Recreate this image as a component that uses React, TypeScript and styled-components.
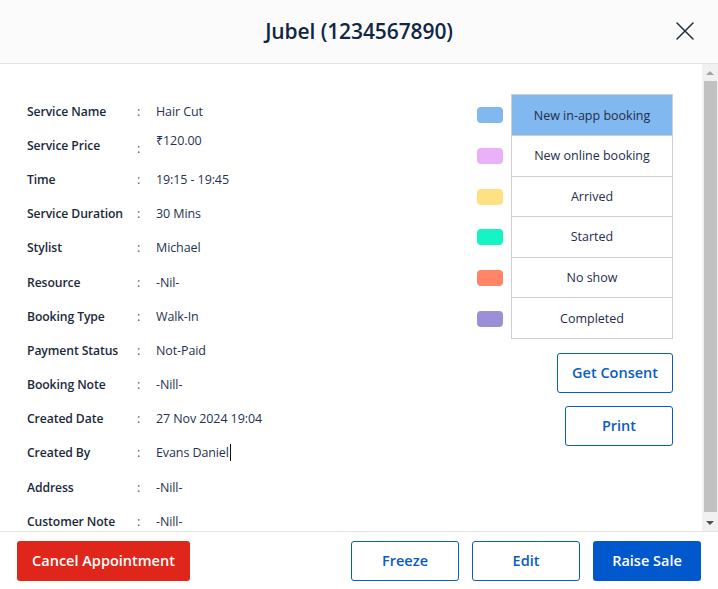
import * as React from 'react'
import styled, { createGlobalStyle } from 'styled-components'

const GlobalStyle = createGlobalStyle`
  html, body {
    margin: 0;
    padding: 0;
    background: #ffffff;
  }
  body {
    font-family: "Open Sans", "Noto Sans", sans-serif;
    color: #1d2b3a;
  }
  * {
    box-sizing: border-box;
  }
`

const Dialog = styled.div`
  width: 718px;
  height: 589px;
  display: flex;
  flex-direction: column;
  background: #fff;
`

const Header = styled.header`
  height: 64px;
  flex: none;
  display: flex;
  align-items: center;
  justify-content: center;
  position: relative;
  background: #fbfbfb;
  border-bottom: 1px solid #e4e4e4;
`

const Title = styled.h1`
  margin: 0 0 1px;
  font-size: 21px;
  font-weight: 600;
  color: #0f2744;
  letter-spacing: -0.1px;
`

const CloseButton = styled.button`
  position: absolute;
  right: 22px;
  top: 20px;
  width: 22px;
  height: 22px;
  padding: 0;
  border: 0;
  background: none;
  color: #1d2b3a;
  cursor: pointer;
`

const BodyWrap = styled.div`
  flex: 1;
  min-height: 0;
  display: flex;
`

const Body = styled.div`
  flex: 1;
  overflow: hidden;
  display: flex;
  align-items: flex-start;
  justify-content: space-between;
  padding: 30px 29px 0 27px;
`

const ScrollTrack = styled.div`
  width: 16px;
  flex: none;
  display: flex;
  flex-direction: column;
  background: #f1f1f1;
`

const ScrollArrow = styled.div<{ $down?: boolean }>`
  height: 17px;
  flex: none;
  display: flex;
  align-items: center;
  justify-content: center;

  &::before {
    content: '';
    border-left: 4px solid transparent;
    border-right: 4px solid transparent;
    ${({ $down }) =>
      $down ? 'border-top: 4px solid #505050;' : 'border-bottom: 4px solid #a3a3a3;'}
  }
`

const ScrollThumb = styled.div`
  height: 431px;
  margin: 0 1px 0 2px;
  background: #c1c1c1;
`

const ScrollRest = styled.div`
  flex: 1;
`

const Details = styled.div`
  flex: none;
  display: flex;
  flex-direction: column;
  padding-bottom: 14px;
`

const Row = styled.div`
  flex: none;
  display: grid;
  grid-template-columns: 110px 19px auto;
  align-items: center;
  height: 34.2px;
  font-size: 12.5px;
`

const Label = styled.span`
  font-size: 12.2px;
  font-weight: 600;
  color: #1b2a3a;
  letter-spacing: -0.1px;
`

const Colon = styled.span<{ $low?: boolean }>`
  color: #55606c;
  transform: ${({ $low }) => ($low ? 'translateY(3px)' : 'none')};
`

const Value = styled.span<{ $raised?: boolean }>`
  color: #1f3250;
  letter-spacing: -0.1px;
  transform: ${({ $raised }) => ($raised ? 'translateY(-5px)' : 'none')};
  display: inline-flex;
  align-items: center;
`

const Caret = styled.span`
  display: inline-block;
  width: 1px;
  height: 17px;
  background: #111;
  margin-left: 1px;
`

const Side = styled.div`
  flex: none;
  display: flex;
  flex-direction: column;
  align-items: flex-end;
`

const Legend = styled.div`
  display: grid;
  grid-template-columns: 26px 162px;
  column-gap: 8px;
`

const Swatch = styled.span<{ $color: string }>`
  align-self: center;
  height: 16px;
  border-radius: 4px;
  background: ${({ $color }) => $color};
`

const LegendCell = styled.div<{ $first?: boolean; $active?: string }>`
  height: ${({ $first }) => ($first ? '42px' : '40.6px')};
  display: flex;
  align-items: center;
  justify-content: center;
  font-size: 12.5px;
  color: #1f2d4a;
  border: 1px solid #cfcfcf;
  border-top: ${({ $first }) => ($first ? '1px solid #cfcfcf' : 'none')};
  background: ${({ $active }) => $active || '#fff'};
`

const OutlineButton = styled.button<{ $width: number }>`
  width: ${({ $width }) => $width}px;
  height: 40px;
  border: 1px solid #0a5bc4;
  border-radius: 3px;
  background: #fff;
  color: #0a5bc4;
  font-family: inherit;
  font-size: 14.5px;
  font-weight: 600;
  cursor: pointer;
`

const SideButtons = styled.div`
  margin-top: 14px;
  display: flex;
  flex-direction: column;
  align-items: flex-end;
  gap: 13px;
`

const Footer = styled.footer`
  height: 58px;
  flex: none;
  display: flex;
  align-items: center;
  gap: 13px;
  padding: 0 17px;
  border-top: 1px solid #e4e4e4;
`

const FilledButton = styled.button<{ $bg: string; $width: number }>`
  width: ${({ $width }) => $width}px;
  height: 40px;
  border: 0;
  border-radius: 3px;
  background: ${({ $bg }) => $bg};
  color: #fff;
  font-family: inherit;
  font-size: 14.5px;
  font-weight: 600;
  cursor: pointer;
`

const Spacer = styled.div`
  flex: 1;
`

const details: { label: string; value: string; raised?: boolean; caret?: boolean }[] = [
  { label: 'Service Name', value: 'Hair Cut' },
  { label: 'Service Price', value: '₹120.00', raised: true },
  { label: 'Time', value: '19:15 - 19:45' },
  { label: 'Service Duration', value: '30 Mins' },
  { label: 'Stylist', value: 'Michael' },
  { label: 'Resource', value: '-Nil-' },
  { label: 'Booking Type', value: 'Walk-In' },
  { label: 'Payment Status', value: 'Not-Paid' },
  { label: 'Booking Note', value: '-Nill-' },
  { label: 'Created Date', value: '27 Nov 2024 19:04' },
  { label: 'Created By', value: 'Evans Daniel', caret: true },
  { label: 'Address', value: '-Nill-' },
  { label: 'Customer Note', value: '-Nill-' },
]

const statuses = [
  { name: 'New in-app booking', color: '#82b8f0' },
  { name: 'New online booking', color: '#e9b1f8' },
  { name: 'Arrived', color: '#ffe083' },
  { name: 'Started', color: '#14f4c4' },
  { name: 'No show', color: '#ff8566' },
  { name: 'Completed', color: '#9c8fd8' },
]

export default function App() {
  return (
    <Dialog>
      <GlobalStyle />
      <Header>
        <Title>Jubel (1234567890)</Title>
        <CloseButton aria-label="Close">
          <svg width="22" height="22" viewBox="0 0 22 22" fill="none" stroke="currentColor" strokeWidth="1.5" strokeLinecap="round">
            <path d="M3 3 L19 19 M19 3 L3 19" />
          </svg>
        </CloseButton>
      </Header>
      <BodyWrap>
        <Body>
          <Details>
            {details.map((d) => (
              <Row key={d.label}>
                <Label>{d.label}</Label>
                <Colon $low={d.raised}>:</Colon>
                <Value $raised={d.raised}>
                  {d.value}
                  {d.caret && <Caret />}
                </Value>
              </Row>
            ))}
          </Details>
          <Side>
            <Legend>
              {statuses.map((s, i) => (
                <React.Fragment key={s.name}>
                  <Swatch $color={s.color} />
                  <LegendCell $first={i === 0} $active={i === 0 ? s.color : undefined}>
                    {s.name}
                  </LegendCell>
                </React.Fragment>
              ))}
            </Legend>
            <SideButtons>
              <OutlineButton $width={116}>Get Consent</OutlineButton>
              <OutlineButton $width={108}>Print</OutlineButton>
            </SideButtons>
          </Side>
        </Body>
        <ScrollTrack>
          <ScrollArrow />
          <ScrollThumb />
          <ScrollRest />
          <ScrollArrow $down />
        </ScrollTrack>
      </BodyWrap>
      <Footer>
        <FilledButton $bg="#e0261a" $width={173}>Cancel Appointment</FilledButton>
        <Spacer />
        <OutlineButton $width={108}>Freeze</OutlineButton>
        <OutlineButton $width={108}>Edit</OutlineButton>
        <FilledButton $bg="#0058cc" $width={108}>Raise Sale</FilledButton>
      </Footer>
    </Dialog>
  )
}
